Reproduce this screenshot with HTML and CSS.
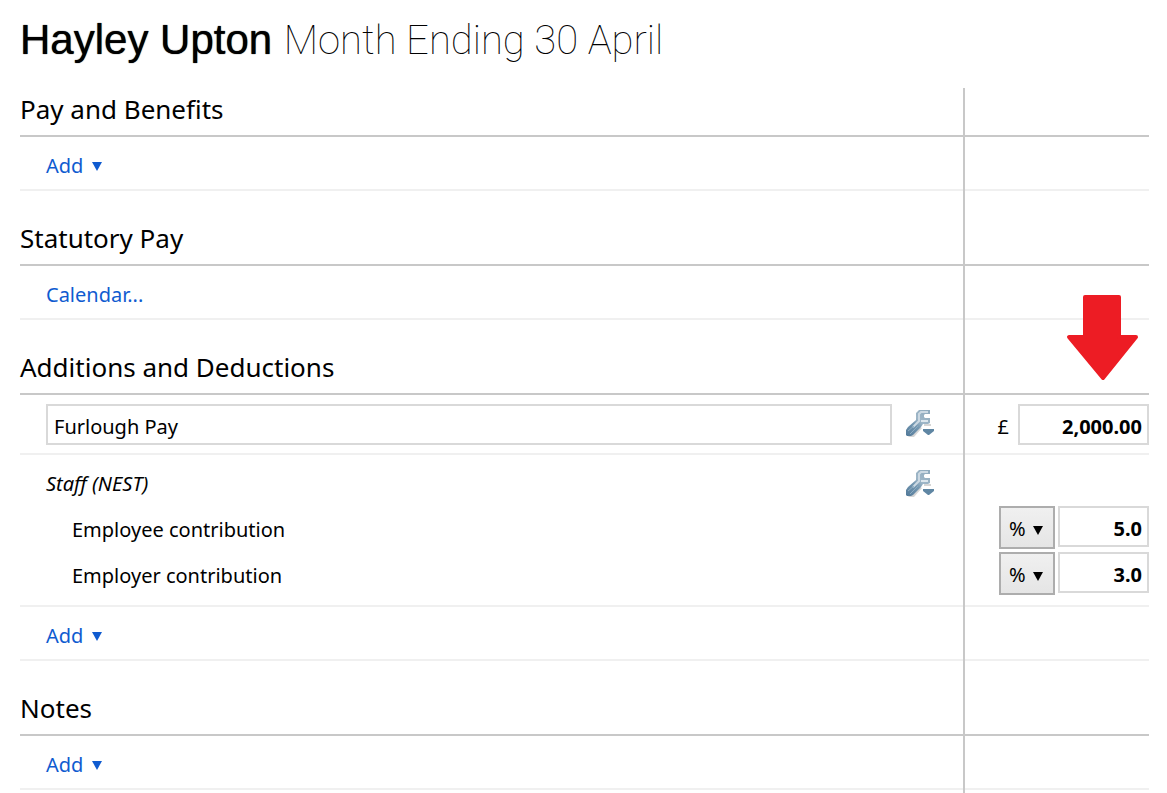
FILE: index.html
```html
<!DOCTYPE html>
<html lang="en">
<head>
<meta charset="UTF-8">
<meta name="viewport" content="width=device-width, initial-scale=1">
<title>Hayley Upton - Month Ending 30 April</title>
<link rel="stylesheet" href="styles.css">
</head>
<body>
<svg class="defs" aria-hidden="true">
  <defs>
    <linearGradient id="steel" gradientUnits="userSpaceOnUse" x1="24" y1="2" x2="3" y2="27">
      <stop offset="0" stop-color="#8faabd"/>
      <stop offset="0.4" stop-color="#9fb7c8"/>
      <stop offset="0.6" stop-color="#7598b2"/>
      <stop offset="1" stop-color="#557c9b"/>
    </linearGradient>
    <symbol id="wrench" viewBox="0 0 30 30">
      <path d="M3 28H9L17 19L12 16ZM19 15H26V17H19Z" fill="#d6d6d6"/>
      <path d="M14 1H25V5H20L19 6V8L20 9H25V14L23 15H18L16 18L8 26L6 27H2L1 26V21L3 18L11 11V4Z" fill="url(#steel)"/>
      <path d="M23 3H16L14 5V12L8 18" fill="none" stroke="#ccd9e3" stroke-width="2"/>
      <path d="M16 12H23" fill="none" stroke="#dce6ed" stroke-width="2"/>
      <path d="M3 22L9 17M5 25L13 17" fill="none" stroke="#8dacc2"/>
      <path d="M18 20H29V22L24 26H23L18 22Z" fill="#5f86a3"/>
    </symbol>
    <symbol id="down" viewBox="0 0 10 9"><path d="M0 0H10L5 9Z" fill="currentColor"/></symbol>
  </defs>
</svg>

<h1>Hayley Upton <span>Month Ending 30 April</span></h1>

<main class="sheet">
  <section>
    <div class="row head"><h2>Pay and Benefits</h2></div>
    <div class="row">
      <div class="item"><button class="link" type="button">Add <svg class="caret"><use href="#down"/></svg></button></div>
    </div>
  </section>

  <section>
    <div class="row head"><h2>Statutory Pay</h2></div>
    <div class="row">
      <div class="item"><a class="link" href="#calendar">Calendar...</a></div>
    </div>
  </section>

  <section>
    <div class="row head">
      <h2>Additions and Deductions</h2>
      <svg class="arrow" viewBox="0 0 72 87" aria-hidden="true">
        <path d="M19 3H53V43H70L37 84L3 43H19Z" fill="#ed1c24" stroke="#ed1c24" stroke-width="4" stroke-linejoin="round"/>
      </svg>
    </div>
    <div class="row addition">
      <div class="item">
        <input class="field name" type="text" value="Furlough Pay" aria-label="Description">
        <button class="tool" type="button" aria-label="Furlough Pay options"><svg><use href="#wrench"/></svg></button>
      </div>
      <div class="amount">
        <label for="furlough">£</label>
        <input class="field total" id="furlough" type="text" value="2,000.00">
      </div>
    </div>
    <div class="row pension">
      <div class="item scheme">
        <em>Staff (NEST)</em>
        <button class="tool" type="button" aria-label="Staff (NEST) options"><svg><use href="#wrench"/></svg></button>
      </div>
      <label class="item sub" for="employee">Employee contribution</label>
      <div class="amount rate">
        <div class="unit">
          <select aria-label="Employee contribution unit"><option>%</option><option>£</option></select>
          <svg class="caret"><use href="#down"/></svg>
        </div>
        <input class="field percent" id="employee" type="text" value="5.0">
      </div>
      <label class="item sub" for="employer">Employer contribution</label>
      <div class="amount rate">
        <div class="unit">
          <select aria-label="Employer contribution unit"><option>%</option><option>£</option></select>
          <svg class="caret"><use href="#down"/></svg>
        </div>
        <input class="field percent" id="employer" type="text" value="3.0">
      </div>
    </div>
    <div class="row">
      <div class="item"><button class="link" type="button">Add <svg class="caret"><use href="#down"/></svg></button></div>
    </div>
  </section>

  <section>
    <div class="row head"><h2>Notes</h2></div>
    <div class="row">
      <div class="item"><button class="link" type="button">Add <svg class="caret"><use href="#down"/></svg></button></div>
    </div>
  </section>
</main>
</body>
</html>
```
FILE: styles.css
```css
* {
  box-sizing: border-box;
}
body {
  margin: 0;
  padding: 16px 18px 0 20px;
  min-height: 100vh;
  display: flex;
  flex-direction: column;
  background: #fff;
  color: #000;
  font-family: "Noto Sans", "Open Sans", sans-serif;
  font-size: 20px;
  line-height: 28px;
}
input, select, button {
  font: inherit;
  color: inherit;
}
.defs {
  position: absolute;
  width: 0;
  height: 0;
}
h1 {
  margin: 0 0 23px;
  font-family: "Liberation Sans", Arial, sans-serif;
  font-size: 42px;
  font-weight: 400;
  line-height: 48px;
  text-shadow: 0 0 1px #000;
}
h1 span {
  font-family: Roboto, sans-serif;
  font-size: 40px;
  font-weight: 100;
  text-shadow: none;
}
h2 {
  margin: 0;
  font-size: 26px;
  font-weight: 400;
  line-height: 42px;
}

/* Pay sheet: description column and amount column */
.sheet {
  flex: 1;
  position: relative;
}
.sheet::after {
  content: "";
  position: absolute;
  top: 0;
  bottom: 0;
  right: 184px;
  width: 2px;
  background: #c8c8c8;
}
section + section {
  margin-top: 26px;
}
.row {
  display: grid;
  grid-template-columns: 1fr 186px;
  align-items: center;
  min-height: 54px;
  border-bottom: 2px solid #f0f0f0;
}
.head {
  position: relative;
  min-height: 49px;
  align-items: start;
  border-bottom-color: #c8c8c8;
}
.item {
  display: flex;
  align-items: center;
  padding-left: 26px;
}
.link {
  display: flex;
  align-items: center;
  gap: 9px;
  padding: 6px 0 0;
  border: 0;
  background: none;
  color: #0f5bd0;
  text-decoration: none;
  cursor: pointer;
}
.link:hover {
  text-decoration: underline;
}
.caret {
  width: 10px;
  height: 9px;
}

/* Fields */
.field {
  height: 41px;
  padding: 6px 6px 2px;
  border: 2px solid #d9d9d9;
  background: #fff;
}
.name {
  flex: 1;
  min-width: 0;
}
.addition {
  min-height: 60px;
}
.amount {
  display: flex;
  justify-content: flex-end;
  align-items: center;
  gap: 9px;
}
.amount label {
  padding-top: 6px;
}
.total, .percent {
  width: 131px;
  padding: 6px 5px 2px;
  font-weight: 700;
  text-align: right;
}
.percent {
  width: 91px;
}
.tool {
  width: 71px;
  height: 30px;
  padding: 0 0 0 13px;
  border: 0;
  background: none;
  text-align: left;
  cursor: pointer;
}
.tool svg {
  display: block;
  width: 30px;
  height: 30px;
}

/* Pension scheme block */
.pension {
  grid-template-rows: 48px 43px 43px;
  row-gap: 3px;
  padding-bottom: 10px;
}
.scheme {
  grid-column: 1 / -1;
  padding-top: 10px;
  padding-right: 186px;
  justify-content: space-between;
}
.sub {
  padding-top: 4px;
  padding-left: 52px;
}
.rate {
  align-items: flex-start;
  gap: 3px;
}
.unit {
  position: relative;
}
.unit select {
  display: block;
  width: 56px;
  height: 43px;
  padding: 2px 8px 0;
  appearance: none;
  border: 2px solid #adadad;
  border-radius: 0;
  background: linear-gradient(#f0f0f0, #e5e5e5);
}
.unit .caret {
  position: absolute;
  right: 12px;
  top: 20px;
  pointer-events: none;
}

/* Pointer over the amount column */
.arrow {
  position: absolute;
  right: 11px;
  bottom: 12px;
  width: 72px;
  height: 87px;
}
```
